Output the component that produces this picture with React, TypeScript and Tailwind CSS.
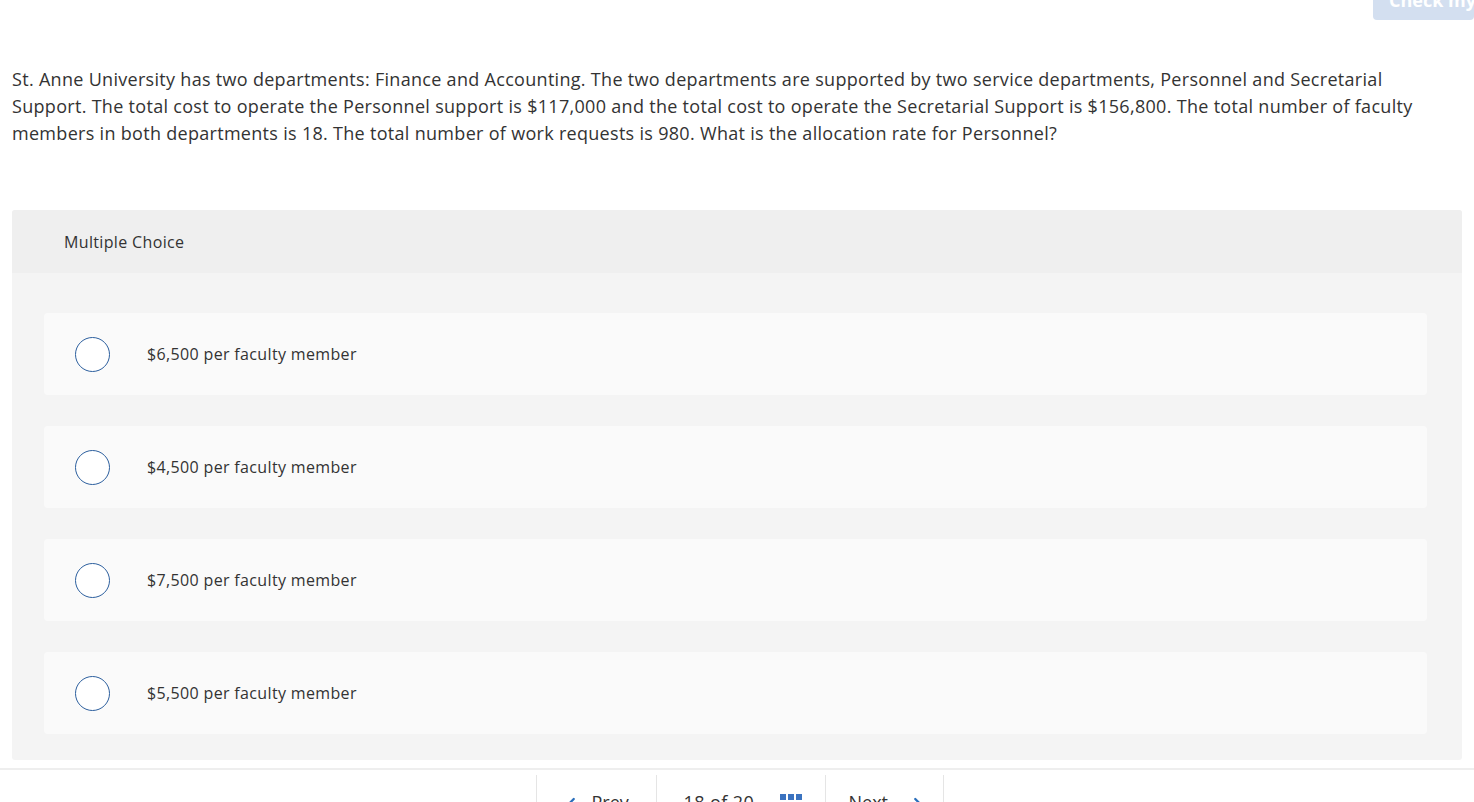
import React from 'react';
import { ChevronLeft, ChevronRight } from 'lucide-react';

const options = [
  '$6,500 per faculty member',
  '$4,500 per faculty member',
  '$7,500 per faculty member',
  '$5,500 per faculty member',
];

const GridIcon = () => (
  <svg width="22" height="22" viewBox="0 0 22 22" fill="#3b73c0">
    <rect x="0" y="0" width="6" height="6" />
    <rect x="8" y="0" width="6" height="6" />
    <rect x="16" y="0" width="6" height="6" />
    <rect x="0" y="8" width="6" height="6" />
    <rect x="8" y="8" width="6" height="6" />
    <rect x="16" y="8" width="6" height="6" />
    <rect x="0" y="16" width="6" height="6" />
    <rect x="8" y="16" width="6" height="6" />
    <rect x="16" y="16" width="6" height="6" />
  </svg>
);

const App: React.FC = () => {
  return (
    <div className="min-h-screen bg-white text-[#333] overflow-hidden" style={{ fontFamily: '"Open Sans", Lato, sans-serif' }}>
      <div className="flex justify-end h-5">
        <button className="-mt-5 h-10 w-[101px] ml-auto rounded-[4px] bg-[#d3dff0] text-white text-[18px] font-bold pl-4 text-left whitespace-nowrap overflow-hidden">
          Check my
        </button>
      </div>

      <p className="mt-[46px] px-3 text-[18px] leading-[27px] tracking-[0.3px] text-[#333]">
        St. Anne University has two departments: Finance and Accounting. The two departments are supported by two service departments, Personnel and Secretarial Support. The total cost to operate the Personnel support is $117,000 and the total cost to operate the Secretarial Support is $156,800. The total number of faculty members in both departments is 18. The total number of work requests is 980. What is the allocation rate for Personnel?
      </p>

      <div className="mx-3 mt-[63px] rounded-[3px] bg-[#f4f4f4] overflow-hidden">
        <div className="h-[63px] flex items-center pl-[52px] bg-[#efefef] text-[16px] tracking-[0.35px] text-[#333]">
          Multiple Choice
        </div>
        <div className="flex flex-col gap-[31px] pt-10 pb-[26px] pl-8 pr-[35px]">
          {options.map((o) => (
            <label key={o} className="h-[82px] flex items-center pl-[31px] bg-[#fafafa] rounded-[4px] cursor-pointer">
              <span className="w-[35px] h-[35px] rounded-full border-[1.5px] border-[#2c5f9e] bg-white shrink-0" />
              <span className="ml-[37px] text-[16px] tracking-[0.35px] text-[#333]">{o}</span>
            </label>
          ))}
        </div>
      </div>

      <div className="mt-2 border-t-2 border-[#eeeeee]">
        <div className="mt-[5px] flex justify-center pl-[5px]">
          <div className="w-[120px] h-[50px] border-l border-[#e5e5e5] flex items-start pt-[14px] pl-[28px] text-[18px] leading-[27px]">
            <ChevronLeft className="w-[14px] h-[27px] text-[#2a6ebb]" strokeWidth={4} />
            <span className="ml-[13px]">Prev</span>
          </div>
          <div className="w-[169px] h-[50px] border-l border-[#e5e5e5] flex items-start pt-[14px] pl-[27px] text-[18px] leading-[27px] tracking-[0.4px]">
            <span>18 of 20</span>
            <span className="ml-[26px] mt-[5px]"><GridIcon /></span>
          </div>
          <div className="w-[119px] h-[50px] border-l border-r border-[#e5e5e5] flex items-start pt-[14px] pl-[23px] text-[18px] leading-[27px]">
            <span>Next</span>
            <ChevronRight className="ml-[22px] w-[14px] h-[27px] text-[#2a6ebb]" strokeWidth={4} />
          </div>
        </div>
      </div>
    </div>
  );
};

export default App;
